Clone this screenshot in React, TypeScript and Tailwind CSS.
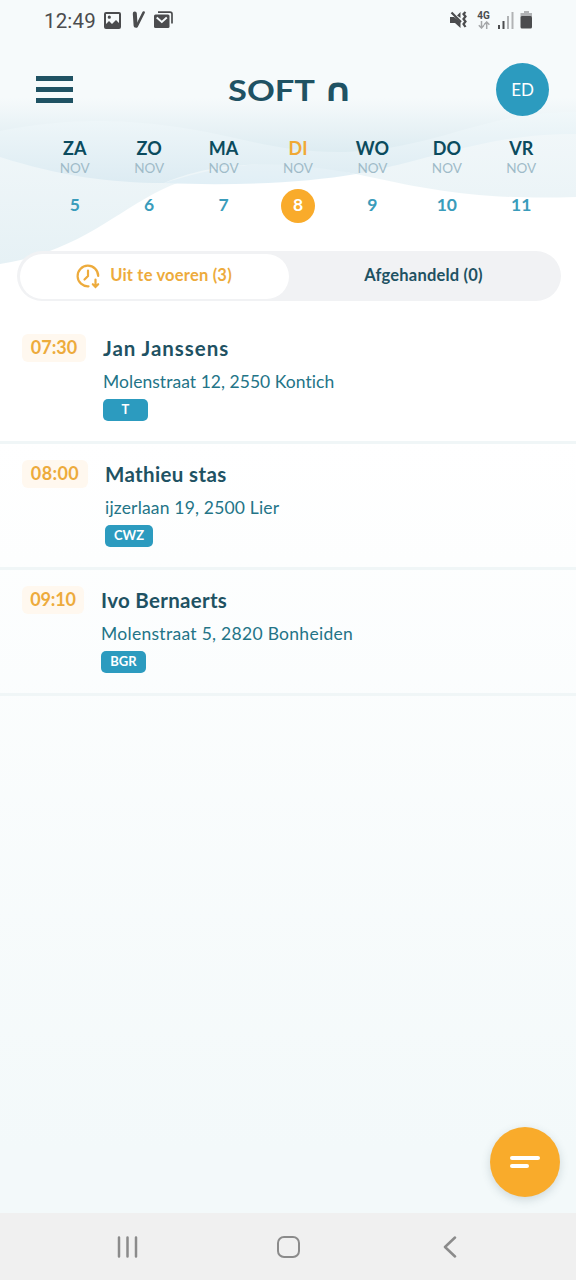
import { ReactNode } from 'react';

const days = [
  { name: 'ZA', date: 5 },
  { name: 'ZO', date: 6 },
  { name: 'MA', date: 7 },
  { name: 'DI', date: 8, active: true },
  { name: 'WO', date: 9 },
  { name: 'DO', date: 10 },
  { name: 'VR', date: 11 },
];

const visits = [
  { time: '07:30', name: 'Jan Janssens', address: 'Molenstraat 12, 2550 Kontich', tag: 'T', badge: 'w-16', tagWidth: 'w-[45px]', nameSpacing: 'tracking-[0.95px]', addressSpacing: 'tracking-[0.04px]' },
  { time: '08:00', name: 'Mathieu stas', address: 'ijzerlaan 19, 2500 Lier', tag: 'CWZ', badge: 'w-[66px] tracking-[0.4px]', tagWidth: 'w-12', nameSpacing: 'tracking-[0.35px]', addressSpacing: 'tracking-[0.18px]' },
  { time: '09:10', name: 'Ivo Bernaerts', address: 'Molenstraat 5, 2820 Bonheiden', tag: 'BGR', badge: 'w-[62px] tracking-[-0.2px]', tagWidth: 'w-[45px]', nameSpacing: 'tracking-[0.3px]', addressSpacing: 'tracking-[0.29px]' },
];

function Waves() {
  return (
    <svg className="absolute left-0 top-0" width="576" height="320" viewBox="0 0 576 320">
      <defs>
        <linearGradient id="back" gradientUnits="userSpaceOnUse" x1="0" y1="98" x2="0" y2="155">
          <stop offset="0" stopColor="#f6fafb" />
          <stop offset="1" stopColor="#dcebf1" />
        </linearGradient>
        <linearGradient id="middle" gradientUnits="userSpaceOnUse" x1="0" y1="110" x2="0" y2="185">
          <stop offset="0" stopColor="#f1f8fa" />
          <stop offset="1" stopColor="#dcebf2" />
        </linearGradient>
        <linearGradient id="front" gradientUnits="userSpaceOnUse" x1="0" y1="130" x2="0" y2="264">
          <stop offset="0" stopColor="#f1f7f9" />
          <stop offset="1" stopColor="#e6f1f5" />
        </linearGradient>
        <linearGradient id="overlap" gradientUnits="userSpaceOnUse" x1="0" y1="163" x2="0" y2="185">
          <stop offset="0" stopColor="#e6f1f6" />
          <stop offset="1" stopColor="#e1eff6" />
        </linearGradient>
      </defs>
      <path fill="#fff" d="M0 150H576V320H0Z" />
      <path fill="url(#front)" d="M0 130V264C88 250 122 203 180 182C245 157 300 160 356 174C430 190 478 200 576 197V130Z" />
      <path fill="url(#overlap)" d="M164 183C230 186 305 183 356 174C310 162 265 160 220 169C200 172 180 178 164 183Z" />
      <path fill="url(#middle)" d="M0 100V157C60 176 110 183 164 183C195 170 232 162 290 165C315 167 335 170 356 174C440 158 485 134 576 134V100Z" />
      <path fill="url(#back)" d="M0 98V131C70 117 130 119 190 129C240 137 280 153 345 152C440 149 480 112 576 112V98Z" />
    </svg>
  );
}

function StatusBar() {
  return (
    <div className="flex h-10 items-center justify-between pl-11 pr-[43px] font-['Roboto',sans-serif] text-[#4b4c4e]">
      <div className="flex items-center">
        <span className="w-[60px] whitespace-nowrap pt-0.5 text-[20.5px] leading-10 tracking-[0.15px]">12:49</span>
        <svg width="17" height="17" viewBox="0 0 17 17">
          <path fill="currentColor" fillRule="evenodd" d="M2 0H15Q17 0 17 2V15Q17 17 15 17H2Q0 17 0 15V2Q0 0 2 0ZM2 2V12L5 9L8 12L12 8L15 11V2ZM5.3 3.6A1.6 1.6 0 1 1 5.3 6.8A1.6 1.6 0 1 1 5.3 3.6Z" />
        </svg>
        <svg className="ml-2.5" width="15" height="18" viewBox="0 0 15 18" fill="none" stroke="currentColor" strokeLinecap="round">
          <path strokeWidth="4" d="M3.8 2.5L4.6 14.5" />
          <path strokeWidth="2.6" d="M5.6 15.5L12.6 1.5" />
        </svg>
        <svg className="ml-2" width="19" height="18" viewBox="0 0 19 18">
          <path fill="none" stroke="currentColor" strokeWidth="1.7" d="M4 1.2H16Q18 1.2 18 3V12.5" />
          <rect y="3.6" width="15.5" height="13.4" rx="1.5" fill="currentColor" />
          <path d="M2.7 6.5L7.8 11L12.8 6.5" fill="none" stroke="#f6fafb" strokeWidth="1.9" />
        </svg>
      </div>
      <div className="flex items-center">
        <svg width="18" height="18" viewBox="0 0 18 18">
          <path fill="currentColor" d="M0 6H4L10.5 11V17L5 12H0ZM10.5 1V7L7 4.5Z" />
          <path fill="none" stroke="currentColor" strokeWidth="2.2" d="M1.5 1.5L11 11M15.5 1L13.5 3L15.5 5.5L13.5 8L15.5 10.5L13.5 13L15.5 16" />
        </svg>
        <div className="ml-[7px] flex w-[17px] flex-col items-center">
          <span className="text-[10px] font-bold leading-[10px]">4G</span>
          <svg width="12" height="8" viewBox="0 0 12 8" fill="none" stroke="#a5a7a9" strokeWidth="1.5">
            <path d="M3.5 0V7M.8 4.2L3.5 7L6 4.2M8.7 8V1M6 3.8L8.7 1L11.4 3.8" />
          </svg>
        </div>
        <svg className="ml-1.5" width="16" height="17" viewBox="0 0 16 17">
          <path fill="currentColor" d="M0 13H2V17H0ZM4.5 9H6.5V17H4.5Z" />
          <path fill="#b1b3b5" d="M9 4H11V17H9ZM13.5 0H15.5V17H13.5Z" />
        </svg>
        <svg className="ml-1.5" width="13" height="18" viewBox="0 0 13 18">
          <path fill="#b1b3b5" d="M4 0H9V2H12V6H.5V2H4Z" />
          <rect x=".5" y="5" width="11.5" height="12.6" rx="1.5" fill="currentColor" />
        </svg>
      </div>
    </div>
  );
}

function Logo() {
  return (
    <svg className="ml-[145px]" width="150" height="52" viewBox="0 0 150 52" fill="#1f5263" fontWeight="700">
      <text x="10" y="37" fontFamily="Lato, sans-serif" fontSize="29" textLength="87" lengthAdjust="spacingAndGlyphs">SOFT</text>
      <text x="105" y="36.5" fontFamily="DejaVu Sans, sans-serif" fontSize="32" textLength="30" lengthAdjust="spacingAndGlyphs">∩</text>
    </svg>
  );
}

function Tab({ children }: { children: ReactNode }) {
  return <div className="flex flex-1 items-center justify-center pb-0.5 text-[16.5px] font-bold tracking-[0.2px]">{children}</div>;
}

export default function App() {
  return (
    <main className="relative flex h-[1280px] w-[576px] flex-col overflow-hidden bg-[linear-gradient(to_bottom,#f6fafb_0,#f6fafb_120px,#fff_270px,#fff_440px,#f3f9fa_1150px)] font-['Lato',sans-serif] text-[#1f5263]">
      <Waves />
      <div className="relative flex flex-1 flex-col">
        <StatusBar />

        <header className="mt-[23px] flex h-[53px] items-center pl-9 pr-[27px]">
          <button className="flex w-[37px] flex-col gap-1.5" aria-label="Menu">
            <span className="h-[5px] bg-[#1f5263]" />
            <span className="h-[5px] bg-[#1f5263]" />
            <span className="h-[5px] bg-[#1f5263]" />
          </button>
          <Logo />
          <div className="ml-auto flex size-[53px] items-center justify-center rounded-full bg-[#2c9bbf] text-[17px] text-white">ED</div>
        </header>

        <div className="mt-[21px] flex pl-[37.5px] pr-[17.5px]">
          {days.map((day) => (
            <div key={day.name} className="flex flex-1 flex-col items-center">
              <span className={`text-[18px] font-bold leading-[23px] ${day.active ? 'text-[#f0a935]' : 'text-[#0b4b5e]'}`}>{day.name}</span>
              <span className="text-[13.5px] leading-[17px] text-[#9fbbc8]">NOV</span>
              <span className={`mt-3 flex size-[34px] items-center justify-center rounded-full pb-0.5 text-[17.5px] font-bold ${day.active ? 'bg-[#f9ab2b] text-white' : 'text-[#3a9cbb]'}`}>{day.date}</span>
            </div>
          ))}
        </div>

        <div className="ml-[17px] mt-[28px] flex h-[50px] w-[544px] rounded-full bg-[#f1f2f4] p-[2.5px]">
          <div className="flex w-[269px] rounded-full bg-white text-[#edab3c]">
            <Tab>
              <svg className="mr-[9px] mt-0.5" width="25" height="25" viewBox="0 0 25 25" fill="none" stroke="currentColor" strokeWidth="2.2" strokeLinecap="round">
                <path d="M12.5 22.3A10.3 10.3 0 1 1 22.2 12M12 6.5V12L8.5 15.5M19.5 15.5V22.5M16.8 20.2L19.5 23L22.2 20.2" />
              </svg>
              Uit te voeren (3)
            </Tab>
          </div>
          <Tab>Afgehandeld (0)</Tab>
        </div>

        <div className="mt-[17px]">
          {visits.map((visit) => (
            <div key={visit.time} className="flex h-[126px] gap-[17px] border-b-[3px] border-[#f0f6f7] px-[22px] pt-4">
              <div className={`${visit.badge} flex h-7 items-center justify-center rounded-md bg-[#fff8ef] pb-px text-[18px] font-bold text-[#edab3c]`}>{visit.time}</div>
              <div>
                <h2 className={`${visit.nameSpacing} text-[20.5px] font-bold leading-[29px]`}>{visit.name}</h2>
                <p className={`${visit.addressSpacing} mt-[7px] text-[17.5px] leading-[23px] text-[#237487]`}>{visit.address}</p>
                <span className={`${visit.tagWidth} mt-1.5 flex h-[22px] items-center justify-center rounded-[5px] bg-[#2c9bbf] text-[13px] font-bold text-white`}>{visit.tag}</span>
              </div>
            </div>
          ))}
        </div>
      </div>

      <button className="absolute left-[490px] top-[1127px] flex size-[70px] flex-col justify-center gap-1 rounded-full bg-[#f9ab2b] pl-5 shadow-[0_3px_10px_rgba(60,90,100,0.2)]" aria-label="Acties">
        <span className="h-1 w-[30px] rounded-full bg-white" />
        <span className="h-1 w-[19px] rounded-full bg-white" />
      </button>

      <nav className="relative flex h-[67px] items-center bg-[#f0f0f0] pl-[117px] text-[#8b8b8b]">
        <svg width="21" height="22" viewBox="0 0 21 22" stroke="currentColor" strokeWidth="2.5" strokeLinecap="round">
          <path d="M2 1.5V20.5M10.5 1.5V20.5M19 1.5V20.5" />
        </svg>
        <span className="ml-[139px] h-[22px] w-[23px] rounded-[7px] border-[2.5px] border-current" />
        <svg className="ml-[143px]" width="14" height="22" viewBox="0 0 14 22" fill="none" stroke="currentColor" strokeWidth="2.5" strokeLinecap="round" strokeLinejoin="round">
          <path d="M12 1.5L2 11L12 20.5" />
        </svg>
      </nav>
    </main>
  );
}
